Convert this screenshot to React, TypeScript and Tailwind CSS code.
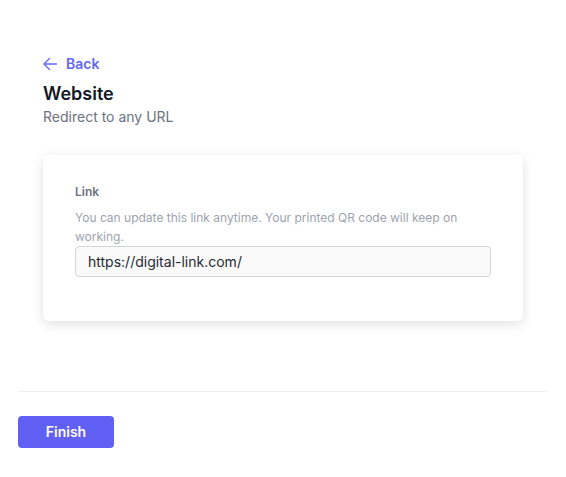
export default function App() {
  return (
    <div className="min-h-screen bg-white px-[18px] font-['Inter',sans-serif]">
      {/* Step content */}
      <div className="px-[25px] pt-[54px]">
        <button className="flex items-center gap-[9px] text-sm font-semibold text-[#6366f1]">
          <svg viewBox="0 0 14 14" className="h-[14px] w-[14px]" fill="none" stroke="currentColor" strokeWidth={1.3} strokeLinecap="round" strokeLinejoin="round">
            <path d="M6.5 1.5L1 7l5.5 5.5M1 7h12.5" />
          </svg>
          Back
        </button>
        <h1 className="mt-[7px] text-lg font-semibold leading-[26px] text-[#111827]">Website</h1>
        <p className="text-sm leading-5 text-[#6b7280]">Redirect to any URL</p>

        {/* Link card */}
        <div className="mt-[28px] rounded-md bg-white px-8 pb-[44px] pt-[29px] shadow-[0_3px_12px_rgba(0,0,0,0.12)]">
          <label className="block text-xs font-semibold leading-4 text-[#6b7280]">Link</label>
          <p className="mt-[8px] text-xs leading-[19px] text-[#9ca3af]">
            You can update this link anytime. Your printed QR code will keep on working.
          </p>
          <input
            className="block h-[31px] w-full rounded border border-[#d4d4d8] bg-[#fafafa] px-3 text-sm text-[#1f2937] outline-none"
            defaultValue="https://digital-link.com/"
          />
        </div>
      </div>

      {/* Footer */}
      <div className="mt-[70px] border-t border-[#f0f0f2] pt-6">
        <button className="h-8 w-24 rounded bg-[#6160f5] text-sm font-semibold text-white">Finish</button>
      </div>
    </div>
  );
}
